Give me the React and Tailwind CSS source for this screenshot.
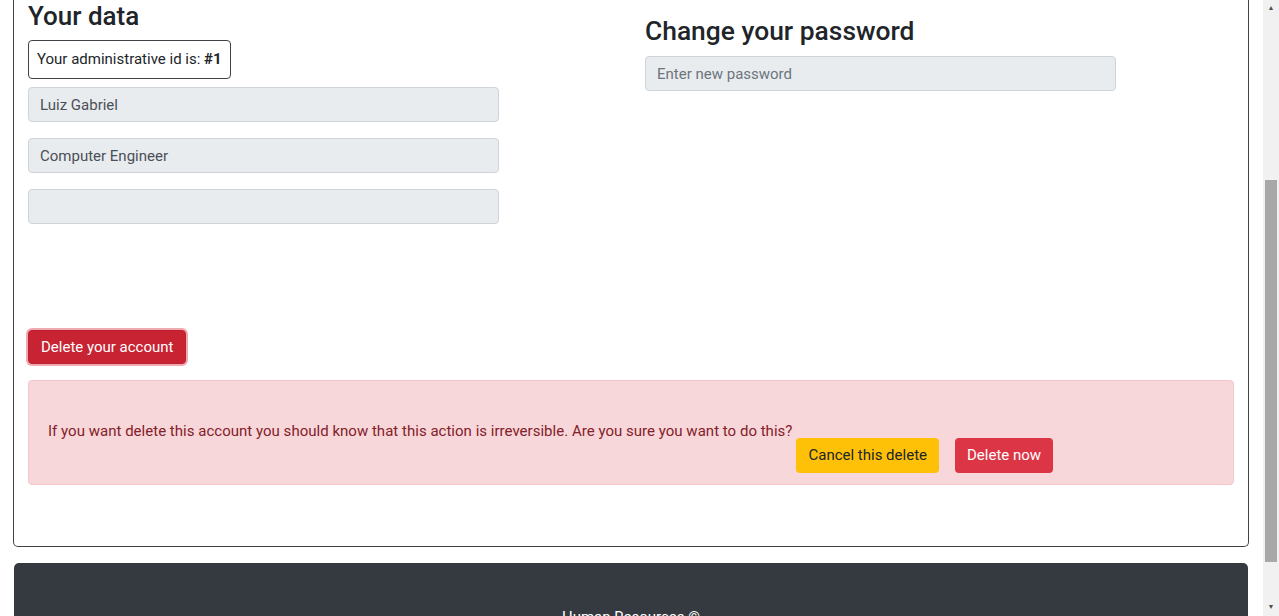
import React from "react";

const inputClass =
  "block w-[471px] h-[35px] px-[11px] rounded-[4px] border border-[#ced4da] bg-[#e9ecef] text-[15px] text-[#495057] placeholder:text-[#6c757d] outline-none";

const ProfileCard = () => {
  return (
    <div className="mx-[13px] mr-[14px] border-x border-b border-[#3f4348] rounded-b-[5px] px-[14px] pt-[1px] pb-[61px]">
      <div className="flex">
        {/* left column: account data */}
        <div className="w-[617px]">
          <h3 className="text-[26px] leading-[31px] font-medium text-[#212529]">Your data</h3>
          <div className="mt-[8px] inline-block border border-[#3f4348] rounded-[4px] px-[8px] py-[7px] leading-[23px] text-[15px] text-[#212529]">
            Your administrative id is: <b>#1</b>
          </div>
          <input className={`${inputClass} mt-[8px]`} value="Luiz Gabriel" disabled readOnly />
          <input className={`${inputClass} mt-[16px]`} value="Computer Engineer" disabled readOnly />
          <input className={`${inputClass} mt-[16px]`} value="" disabled readOnly />
        </div>

        {/* right column: password */}
        <div className="flex-1">
          <h3 className="mt-[15px] text-[26.4px] leading-[31px] font-medium text-[#212529]">
            Change your password
          </h3>
          <input className={`${inputClass} mt-[9px]`} placeholder="Enter new password" />
        </div>
      </div>

      <button
        type="button"
        className="mt-[106px] h-[34px] px-[12px] rounded-[4px] bg-[#c82333] border border-[#bd2130] text-white text-[15px] shadow-[0_0_0_2px_rgba(225,83,97,0.5)]"
      >
        Delete your account
      </button>

      <div className="mt-[16px] flex items-start rounded-[4px] border border-[#f5c6cb] bg-[#f8d7da] pl-[19px] pt-[39px] pb-[11px] text-[#842029]">
        <p className="text-[15px] leading-[22.5px] tracking-[0.02px]">
          If you want delete this account you should know that this action is irreversible. Are you sure you want to do this?
        </p>
        <div className="mt-[18px] ml-[4px] flex gap-[16px]">
          <button
            type="button"
            className="h-[35px] px-[12px] rounded-[4px] bg-[#ffc107] text-[#212529] text-[15px]"
          >
            Cancel this delete
          </button>
          <button
            type="button"
            className="h-[35px] px-[12px] rounded-[4px] bg-[#dc3545] text-white text-[15px]"
          >
            Delete now
          </button>
        </div>
      </div>
    </div>
  );
};

const Scrollbar = () => (
  <div className="w-[16px] h-[616px] bg-[#f1f1f1] flex flex-col items-center">
    <div className="h-[17px] flex items-center justify-center text-[#505050] text-[7px] leading-none">▲</div>
    <div className="mt-[163px] w-[12px] h-[382px] bg-[#a8a8a8]"></div>
    <div className="flex-1"></div>
    <div className="h-[17px] flex items-center justify-center text-[#505050] text-[7px] leading-none">▼</div>
  </div>
);

export default function App() {
  return (
    <div
      className="flex h-[616px] overflow-hidden bg-white"
      style={{ fontFamily: "Roboto, 'Liberation Sans', sans-serif" }}
    >
      <div className="flex-1">
        <ProfileCard />
        <footer className="mt-[16px] ml-[14px] mr-[15px] h-[100px] rounded-t-[5px] bg-[#343a40] pt-[43px] text-center text-[15px] text-white">
          Human Resources ©
        </footer>
      </div>
      <Scrollbar />
    </div>
  );
}
